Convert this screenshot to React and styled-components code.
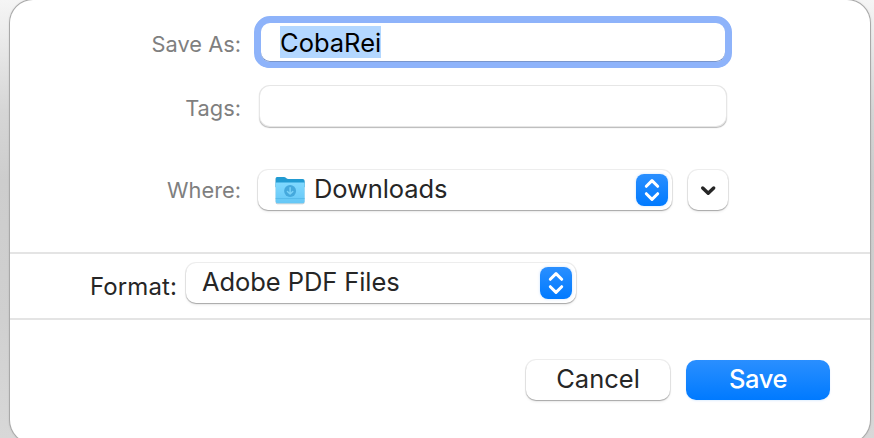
import React from "react";
import styled, { createGlobalStyle } from "styled-components";

const GlobalStyle = createGlobalStyle`
  * { box-sizing: border-box; }
  html, body { margin: 0; height: 100%; overflow: hidden; }
  body { font-family: Inter, "Liberation Sans", sans-serif; background: #d1d1d1; }
  #root { height: 100%; }
`;

const Backdrop = styled.div`
  height: 438px;
  padding: 0 4px 0 10px;
  overflow: hidden;
  background: linear-gradient(#f5f5f5 0, #ededed 30px, #d6d6d6 110px, #cdcdcd 180px, #d0d0d0 320px, #d8d8d8 438px);
`;

const Dialog = styled.section`
  height: 443px;
  overflow: hidden;
  border-radius: 23px;
  background: #fff;
  box-shadow: 0 0 0 1px #a9a9a9, 0 0 3px rgba(0, 0, 0, 0.2);
`;

const Fields = styled.div`
  height: 254px;
  padding-top: 22px;
  border-bottom: 2px solid #e4e4e4;
`;

const Row = styled.div`
  display: grid;
  grid-template-columns: 231px auto;
  column-gap: ${(p) => p.$gap}px;
  height: 42px;
  margin-bottom: ${(p) => p.$after}px;
`;

const Label = styled.label`
  justify-self: ${(p) => (p.$strong ? "start" : "end")};
  height: 42px;
  padding-top: ${(p) => p.$top ?? 1}px;
  font-size: ${(p) => (p.$strong ? 24 : 21.8)}px;
  line-height: ${(p) => p.$line || 42}px;
  letter-spacing: ${(p) => (p.$strong ? 0.1 : 0)}px;
  white-space: nowrap;
  color: ${(p) => (p.$strong ? "#262626" : "#7f7f7f")};
`;

const NameField = styled.div`
  display: flex;
  align-items: center;
  width: 464px;
  height: 39px;
  margin-top: 1px;
  padding: 0 0 1px 19px;
  border-radius: 9px;
  background: #fff;
  box-shadow: 0 0 0 6px #8eb3fa, 0 -1px 0 6px #8eb3fa, -1px 0 0 6px #8eb3fa, 1px 0 0 6px #8eb3fa, inset 0 -1px 0 #7895cc;
`;

const Selection = styled.span`
  width: 101px;
  height: 32px;
  background: #b3d7ff;
  color: #000;
  font-size: 25.5px;
  line-height: 33px;
  white-space: nowrap;
`;

const TagsField = styled.div`
  width: 466px;
  height: 40px;
  margin-top: 1px;
  border-radius: 10px;
  background: #fff;
  box-shadow: 0 0 0 1px #e6e6e6, 0 1px 1px 0.5px #b8b8b8;
`;

const Controls = styled.div`
  display: flex;
  gap: 16px;
`;

const Control = styled.button`
  display: flex;
  align-items: center;
  justify-content: ${(p) => (p.$center ? "center" : "flex-start")};
  width: ${(p) => p.$width}px;
  height: 40px;
  padding: ${(p) => p.$pad || "0"};
  border: 0;
  border-radius: 10px;
  background: ${(p) => (p.$primary ? "linear-gradient(#2a8fff, #007aff)" : "#fff")};
  color: ${(p) => (p.$primary ? "#fff" : "#262626")};
  font: ${(p) => (p.$primary ? 500 : 400)} 25.5px Inter, "Liberation Sans", sans-serif;
  box-shadow: ${(p) =>
    p.$primary
      ? "0 1px 2px rgba(0, 122, 255, 0.12)"
      : "0 0 0 1px rgba(0, 0, 0, 0.07), 0 1px 1px rgba(0, 0, 0, 0.24), 0 2px 3px rgba(0, 0, 0, 0.07)"};
`;

const Value = styled.span`
  flex: ${(p) => (p.$fill ? 1 : "none")};
  line-height: 40px;
  margin-top: -2px;
  text-align: left;
  white-space: nowrap;
  letter-spacing: ${(p) => p.$track || 0}px;
`;

const Stepper = styled.span`
  display: grid;
  place-items: center;
  flex: none;
  width: 32px;
  height: 32px;
  border-radius: 8px;
  background: linear-gradient(#2a8fff, #007aff);
  box-shadow: 0 0 3px rgba(0, 122, 255, 0.22);
`;

const FormatSection = styled.div`
  display: flex;
  height: 66px;
  padding: 9px 0 0 80px;
  border-bottom: 2px solid #e4e4e4;
`;

const FormatLabelSlot = styled.div`
  width: 96px;
`;

const Actions = styled.div`
  display: flex;
  justify-content: flex-end;
  gap: 16px;
  padding: 40px 40px 0 0;
`;

const IconSvg = styled.svg`
  display: block;
  flex: none;
`;

const FolderSvg = styled(IconSvg)`
  margin-right: 8px;
`;

function UpDown() {
  return (
    <Stepper>
      <IconSvg width="32" height="32" fill="none" stroke="#fff" strokeWidth="3" strokeLinecap="round" strokeLinejoin="round">
        <path d="M10.3 12.3 16 6.6l5.7 5.7M10.3 19.7l5.7 5.7 5.7-5.7" />
      </IconSvg>
    </Stepper>
  );
}

function ChevronDown() {
  return (
    <IconSvg width="40" height="40" fill="none" stroke="#262626" strokeWidth="3.4" strokeLinecap="round" strokeLinejoin="round">
      <path d="m14.7 18 5.5 5.3 5.5-5.3" />
    </IconSvg>
  );
}

function Folder() {
  return (
    <FolderSvg width="32" height="32" viewBox="0 0 32 32">
      <defs>
        <linearGradient id="folderFront" x2="0" y2="1">
          <stop stopColor="#80d9ff" />
          <stop offset="1" stopColor="#65c7f6" />
        </linearGradient>
        <filter id="folderShadow" x="-20%" y="-20%" width="140%" height="150%">
          <feDropShadow dx="0" dy="0.8" stdDeviation="0.6" floodOpacity="0.3" />
        </filter>
      </defs>
      <g filter="url(#folderShadow)">
        <path d="M1.6 4.7C1.6 3.5 2.4 3 3.6 3h6.2c2 0 2.6 2 4.6 2H28.6c1.2 0 2 .8 2 2v6h-29z" fill="#229bd2" />
        <path d="M1.6 9.8c0-.8.5-1.3 1.4-1.3h26.2c.9 0 1.4.5 1.4 1.3v17.5c0 1.2-.7 1.9-1.9 1.9H3.5c-1.2 0-1.9-.7-1.9-1.9z" fill="url(#folderFront)" />
      </g>
      <path d="M1.6 24.6h29" stroke="#52b6e7" strokeWidth=".8" />
      <circle cx="16.1" cy="16.9" r="6" fill="#45a9dd" />
      <path d="M16.1 13.6v6.4m-2.7-2.6 2.7 2.7 2.7-2.7" fill="none" stroke="#7bd2f8" strokeWidth="1.4" strokeLinecap="round" strokeLinejoin="round" />
    </FolderSvg>
  );
}

export default function App() {
  return (
    <>
      <GlobalStyle />
      <Backdrop>
        <Dialog>
          <Fields>
            <Row $gap={20} $after={21}>
              <Label>Save As:</Label>
              <NameField>
                <Selection>CobaRei</Selection>
              </NameField>
            </Row>
            <Row $gap={19} $after={43}>
              <Label $top={2}>Tags:</Label>
              <TagsField />
            </Row>
            <Row $gap={17} $after={0}>
              <Label $top={0} $line={40}>Where:</Label>
              <Controls>
                <Control type="button" $width={414} $pad="0 4px 0 16px">
                  <Folder />
                  <Value $fill $track={-0.1}>Downloads</Value>
                  <UpDown />
                </Control>
                <Control type="button" $width={40} $center aria-label="Expand">
                  <ChevronDown />
                </Control>
              </Controls>
            </Row>
          </Fields>
          <FormatSection>
            <FormatLabelSlot>
              <Label as="div" $strong $top={3}>Format:</Label>
            </FormatLabelSlot>
            <Control type="button" $width={390} $pad="0 4px 0 16px">
              <Value $fill $track={-0.08}>Adobe PDF Files</Value>
              <UpDown />
            </Control>
          </FormatSection>
          <Actions>
            <Control type="button" $width={144} $center>
              <Value>Cancel</Value>
            </Control>
            <Control type="button" $width={144} $center $primary>
              <Value $track={-0.4}>Save</Value>
            </Control>
          </Actions>
        </Dialog>
      </Backdrop>
    </>
  );
}
